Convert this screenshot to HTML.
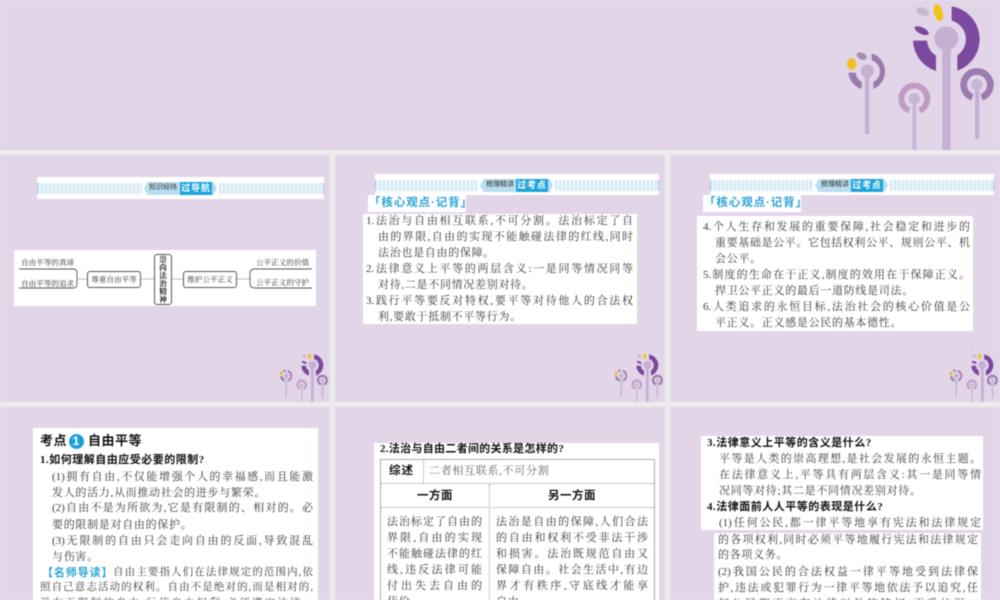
<!DOCTYPE html>
<html lang="zh"><head><meta charset="utf-8"><style>
html,body{margin:0;padding:0;background:#ececec;width:1000px;height:600px;overflow:hidden}
#r{position:relative;width:1000px;height:600px;overflow:hidden;filter:blur(.55px);font-family:"Liberation Serif","Noto Serif CJK SC",serif;color:#3a3a3a;font-size:11px}
#r div,#r svg{position:absolute}
.s{background:#e3d5e8}
.w{background:#fff}
.l{white-space:nowrap;height:16px;line-height:16px;text-align:justify;text-align-last:justify;letter-spacing:0}
.e{white-space:nowrap;height:16px;line-height:16px;letter-spacing:.7px}
.b{font-weight:700;color:#111;font-family:"Liberation Serif","Noto Sans CJK SC",sans-serif;letter-spacing:.5px}
.m{white-space:nowrap;font-size:7.6px;height:10px;line-height:10px;color:#333}
.st{background:linear-gradient(90deg,#9fd0e6 0 1px,transparent 1px),repeating-linear-gradient(90deg,#d2e9f5 0 2px,#eef7fc 2px 4px);height:11px}
.str{background:linear-gradient(270deg,#9fd0e6 0 1px,transparent 1px),repeating-linear-gradient(90deg,#d2e9f5 0 2px,#eef7fc 2px 4px);height:11px}
.hx{background:#b9def0;clip-path:polygon(0 50%,5% 0,95% 0,100% 50%,95% 100%,5% 100%);height:13px}
.tb{background:#1ea4dc;color:#fff;font:700 9px/13px "Liberation Sans","Noto Sans CJK SC",sans-serif;letter-spacing:.8px;text-align:center;height:13px;width:32px;overflow:hidden}
.tl{font:7px/10px "Liberation Sans","Noto Sans CJK SC",sans-serif;color:#333;height:10px;white-space:nowrap}
.t{color:#2aa3d5;font:700 11.5px/16px "Liberation Sans","Noto Sans CJK SC",sans-serif;white-space:nowrap;letter-spacing:.9px}
.bx{border:1px solid #555;border-radius:3px;background:#fff;box-sizing:border-box;text-align:center;font-size:7.6px;color:#333;white-space:nowrap}
</style></head><body><div id="r">
<svg width="0" height="0" style="left:0;top:0"><defs><symbol id="p" viewBox="0 0 510 450">
<rect x="105" y="213" width="13" height="190" rx="3" fill="#c5b0d4"/>
<rect x="247" y="296" width="12" height="154" fill="#c8b6d8"/>
<rect x="435" y="254" width="13" height="164" rx="3" fill="#c5b0d4"/>
<rect x="337" y="118" width="25" height="332" fill="#c5b0d4"/>
<path d="M365 19A100 100 0 0 1 382 212L382 166A58 58 0 0 0 365 62Z" fill="#7b4a9e"/>
<path d="M249 122A100 100 0 0 0 318 213L318 167A58 58 0 0 1 291 122Z" fill="#7b4a9e"/>
<circle cx="349" cy="115" r="36" fill="#c5b0d4"/>
<ellipse cx="278" cy="35" rx="20" ry="12" transform="rotate(20 278 35)" fill="#c8b8d4"/>
<ellipse cx="325" cy="38" rx="13" ry="26" transform="rotate(-15 325 38)" fill="#f3c316"/>
<ellipse cx="275" cy="92" rx="23" ry="10" transform="rotate(25 275 92)" fill="#7b4a9e"/>
<path d="M125 160A57 57 0 0 1 130 267L130 246A35 35 0 0 0 125 181Z" fill="#9a7bb0"/>
<path d="M55 218A57 57 0 0 0 95 267L95 246A35 35 0 0 1 77 218Z" fill="#9a7bb0"/>
<circle cx="112" cy="213" r="20" fill="#c5b0d4"/>
<ellipse cx="65" cy="192" rx="14" ry="17" fill="#f0c020"/>
<ellipse cx="95" cy="168" rx="16" ry="10" transform="rotate(25 95 168)" fill="#a88cb8"/>
<path d="M238 332A39 39 0 1 1 268 332" fill="none" stroke="#c09cc4" stroke-width="18"/>
<circle cx="253" cy="296" r="17" fill="#c8b6d8"/>
<path d="M427 292A40 40 0 1 1 455 292" fill="none" stroke="#9c7bb0" stroke-width="20"/>
<circle cx="441" cy="254" r="17" fill="#c8b6d8"/>
</symbol></defs></svg>

<div class="s" style="left:0;top:0;width:1000px;height:150px"></div>
<div class="s" style="left:0;top:155px;width:330px;height:247px"></div>
<div class="s" style="left:335px;top:155px;width:330px;height:247px"></div>
<div class="s" style="left:670px;top:155px;width:330px;height:247px"></div>
<div class="s" style="left:0;top:407px;width:330px;height:193px"></div>
<div class="s" style="left:335px;top:407px;width:330px;height:193px"></div>
<div class="s" style="left:670px;top:407px;width:330px;height:193px"></div>

<svg style="left:830px;top:0" width="170" height="150"><use href="#p" width="170" height="150"/></svg>
<svg style="left:274px;top:352px" width="56" height="50"><use href="#p" width="56" height="50"/></svg>
<svg style="left:609px;top:352px" width="56" height="50"><use href="#p" width="56" height="50"/></svg>
<svg style="left:944px;top:352px" width="56" height="50"><use href="#p" width="56" height="50"/></svg>
<div style="left:301px;top:349px;width:2px;height:2px;border-radius:50%;background:#cdbcd8"></div>
<div style="left:636px;top:349px;width:2px;height:2px;border-radius:50%;background:#cdbcd8"></div>
<div style="left:971px;top:349px;width:2px;height:2px;border-radius:50%;background:#cdbcd8"></div>

<!-- header 1 -->
<div class="w" style="left:37px;top:177px;width:287px;height:22px"></div>
<div class="st" style="left:37px;top:183px;width:105px"></div>
<div class="str" style="left:219px;top:183px;width:105px"></div>
<div class="hx" style="left:144px;top:182px;width:73px"></div>
<div class="tl" style="left:149px;top:183px">知识经纬</div>
<div class="tb" style="left:180px;top:182px">过导航</div>
<!-- mind map -->
<div class="w" style="left:14px;top:250px;width:302px;height:56px"></div>
<div class="m" style="left:21px;top:258px">自由平等的真谛</div>
<div class="m" style="left:21px;top:279px">自由平等的追求</div>
<svg style="left:14px;top:250px" width="302" height="56" fill="none" stroke="#555" stroke-width=".9">
<path d="M5 19H59Q63 19 63 23V34Q63 38 59 38H5"/>
<path d="M63 29H73M127 29H141M158 29H169M223 29H236" stroke="#bbb"/>
<path d="M298 19H241Q236 19 236 23V34Q236 38 241 38H298"/>
</svg>
<div class="bx" style="left:87px;top:271px;width:54px;height:17px;line-height:15px">尊重自由平等</div>
<div class="bx" style="left:154px;top:254px;width:18px;height:51px;line-height:8px;padding-top:1px;font-weight:700;color:#111;white-space:normal">崇<br>尚<br>法<br>治<br>精<br>神</div>
<div class="bx" style="left:183px;top:271px;width:54px;height:17px;line-height:15px">维护公平正义</div>
<div class="m" style="left:256px;top:258px">公平正义的价值</div>
<div class="m" style="left:256px;top:278px">公平正义的守护</div>

<!-- header 2 -->
<div class="w" style="left:375px;top:174px;width:284px;height:21px"></div>
<div class="st" style="left:375px;top:180px;width:103px"></div>
<div class="str" style="left:555px;top:180px;width:104px"></div>
<div class="hx" style="left:480px;top:179px;width:73px"></div>
<div class="tl" style="left:486px;top:180px">梳理精讲</div>
<div class="tb" style="left:516px;top:179px">过考点</div>
<div class="w" style="left:368px;top:195px;width:98px;height:17px"></div>
<div class="t" style="left:369px;top:195px">「核心观点·记背」</div>
<div class="w" style="left:363px;top:214px;width:274px;height:110px"></div>
<div class="l" style="left:366px;top:213px;width:267px">1.法治与自由相互联系,不可分割。法治标定了自</div>
<div class="l" style="left:378px;top:229px;width:255px">由的界限,自由的实现不能触碰法律的红线,同时</div>
<div class="e" style="left:378px;top:245px">法治也是自由的保障。</div>
<div class="l" style="left:366px;top:261px;width:267px">2.法律意义上平等的两层含义:一是同等情况同等</div>
<div class="e" style="left:378px;top:277px">对待,二是不同情况差别对待。</div>
<div class="l" style="left:366px;top:293px;width:267px">3.践行平等要反对特权,要平等对待他人的合法权</div>
<div class="e" style="left:378px;top:309px">利,要敢于抵制不平等行为。</div>

<!-- header 3 -->
<div class="w" style="left:710px;top:174px;width:284px;height:21px"></div>
<div class="st" style="left:710px;top:180px;width:103px"></div>
<div class="str" style="left:890px;top:180px;width:104px"></div>
<div class="hx" style="left:815px;top:179px;width:73px"></div>
<div class="tl" style="left:821px;top:180px">梳理精讲</div>
<div class="tb" style="left:851px;top:179px">过考点</div>
<div class="w" style="left:703px;top:195px;width:98px;height:17px"></div>
<div class="t" style="left:704px;top:195px">「核心观点·记背」</div>
<div class="w" style="left:697px;top:216px;width:276px;height:115px"></div>
<div class="l" style="left:703px;top:219px;width:267px">4.个人生存和发展的重要保障,社会稳定和进步的</div>
<div class="l" style="left:715px;top:235px;width:255px">重要基础是公平。它包括权利公平、规则公平、机</div>
<div class="e" style="left:715px;top:251px">会公平。</div>
<div class="l" style="left:703px;top:267px;width:267px">5.制度的生命在于正义,制度的效用在于保障正义。</div>
<div class="e" style="left:715px;top:283px">捍卫公平正义的最后一道防线是司法。</div>
<div class="l" style="left:703px;top:299px;width:267px">6.人类追求的永恒目标,法治社会的核心价值是公</div>
<div class="e" style="left:715px;top:315px">平正义。正义感是公民的基本德性。</div>

<!-- bottom 1 -->
<div class="w" style="left:33px;top:428px;width:285px;height:172px"></div>
<div class="b" style="left:40px;top:433px;font-size:13px;line-height:16px;white-space:nowrap">考点</div>
<div style="left:68.5px;top:433.5px;width:15px;height:15px;border-radius:50%;background:#1f9fd8;color:#fff;font:700 12px/15px 'Liberation Sans',sans-serif;text-align:center">1</div>
<div class="b" style="left:88px;top:433px;font-size:13px;line-height:16px;white-space:nowrap;letter-spacing:.5px">自由平等</div>
<div class="e b" style="left:40px;top:452px">1.如何理解自由应受必要的限制?</div>
<div class="l" style="left:52px;top:469px;width:261px">(1)拥有自由,不仅能增强个人的幸福感,而且能激</div>
<div class="e" style="left:52px;top:485px">发人的活力,从而推动社会的进步与繁荣。</div>
<div class="l" style="left:52px;top:500px;width:261px">(2)自由不是为所欲为,它是有限制的、相对的。必</div>
<div class="e" style="left:52px;top:517px">要的限制是对自由的保护。</div>
<div class="l" style="left:52px;top:533px;width:261px">(3)无限制的自由只会走向自由的反面,导致混乱</div>
<div class="e" style="left:52px;top:549px">与伤害。</div>
<div class="t" style="left:42px;top:565px;font-size:11px">【名师导读】</div>
<div class="l" style="left:113px;top:565px;width:200px;font-size:10.5px">自由主要指人们在法律规定的范围内,依</div>
<div class="l" style="left:40px;top:580px;width:273px;font-size:10.5px">照自己意志活动的权利。自由不是绝对的,而是相对的,</div>
<div class="l" style="left:40px;top:596px;width:273px;font-size:10.5px">没有无限制的自由,行使自由权利,必须遵守法律。</div>

<!-- bottom 2 -->
<div class="w" style="left:374px;top:443px;width:285px;height:157px"></div>
<div class="e b" style="left:380px;top:441px;letter-spacing:.3px">2.法治与自由二者间的关系是怎样的?</div>
<div style="left:380px;top:459px;width:275px;height:141px;border:1px solid #aaa;border-bottom:0;box-sizing:border-box"></div>
<div style="left:381px;top:483px;width:273px;border-top:1px dotted #999"></div>
<div style="left:381px;top:507px;width:273px;border-top:1px dotted #999"></div>
<div style="left:423px;top:460px;height:23px;border-left:1px dotted #999"></div>
<div style="left:489px;top:484px;height:116px;border-left:1px dotted #999"></div>
<div class="b" style="left:389px;top:463px;font-size:11.5px;line-height:16px;white-space:nowrap;letter-spacing:1px">综述</div>
<div class="e" style="left:429px;top:463px;color:#666">二者相互联系,不可分割</div>
<div class="b" style="left:417px;top:488px;font-size:11.5px;line-height:16px;white-space:nowrap">一方面</div>
<div class="b" style="left:548px;top:488px;font-size:11.5px;line-height:16px;white-space:nowrap">另一方面</div>
<div class="l" style="left:387px;top:514px;width:95px">法治标定了自由的</div>
<div class="l" style="left:387px;top:530px;width:95px">界限,自由的实现</div>
<div class="l" style="left:387px;top:546px;width:95px">不能触碰法律的红</div>
<div class="l" style="left:387px;top:562px;width:95px">线,违反法律可能</div>
<div class="l" style="left:387px;top:578px;width:95px">付出失去自由的</div>
<div class="e" style="left:387px;top:594px">代价。</div>
<div class="l" style="left:496px;top:514px;width:152px">法治是自由的保障,人们合法</div>
<div class="l" style="left:496px;top:530px;width:152px">的自由和权利不受非法干涉</div>
<div class="l" style="left:496px;top:546px;width:152px">和损害。法治既规范自由又</div>
<div class="l" style="left:496px;top:562px;width:152px">保障自由。社会生活中,有边</div>
<div class="l" style="left:496px;top:578px;width:152px">界才有秩序,守底线才能享</div>
<div class="e" style="left:496px;top:594px">自由。</div>

<!-- bottom 3 -->
<div class="w" style="left:701px;top:436px;width:282px;height:94px"></div>
<div class="w" style="left:714px;top:533px;width:267px;height:67px"></div>
<div class="e b" style="left:707px;top:435px">3.法律意义上平等的含义是什么?</div>
<div class="l" style="left:719px;top:451px;width:262px">平等是人类的崇高理想,是社会发展的永恒主题。</div>
<div class="l" style="left:719px;top:467px;width:262px">在法律意义上,平等具有两层含义:其一是同等情</div>
<div class="e" style="left:719px;top:483px">况同等对待;其二是不同情况差别对待。</div>
<div class="e b" style="left:707px;top:499px">4.法律面前人人平等的表现是什么?</div>
<div class="l" style="left:719px;top:515px;width:262px">(1)任何公民,都一律平等地享有宪法和法律规定</div>
<div class="l" style="left:718px;top:532px;width:260px">的各项权利,同时必须平等地履行宪法和法律规定</div>
<div class="e" style="left:718px;top:547px">的各项义务。</div>
<div class="l" style="left:718px;top:564px;width:260px">(2)我国公民的合法权益一律平等地受到法律保</div>
<div class="l" style="left:718px;top:580px;width:260px">护,违法或犯罪行为一律平等地依法予以追究,任</div>
<div class="l" style="left:718px;top:596px;width:260px">何公民都不享有法律以外的特权,不受歧视。</div>
</div></body></html>
